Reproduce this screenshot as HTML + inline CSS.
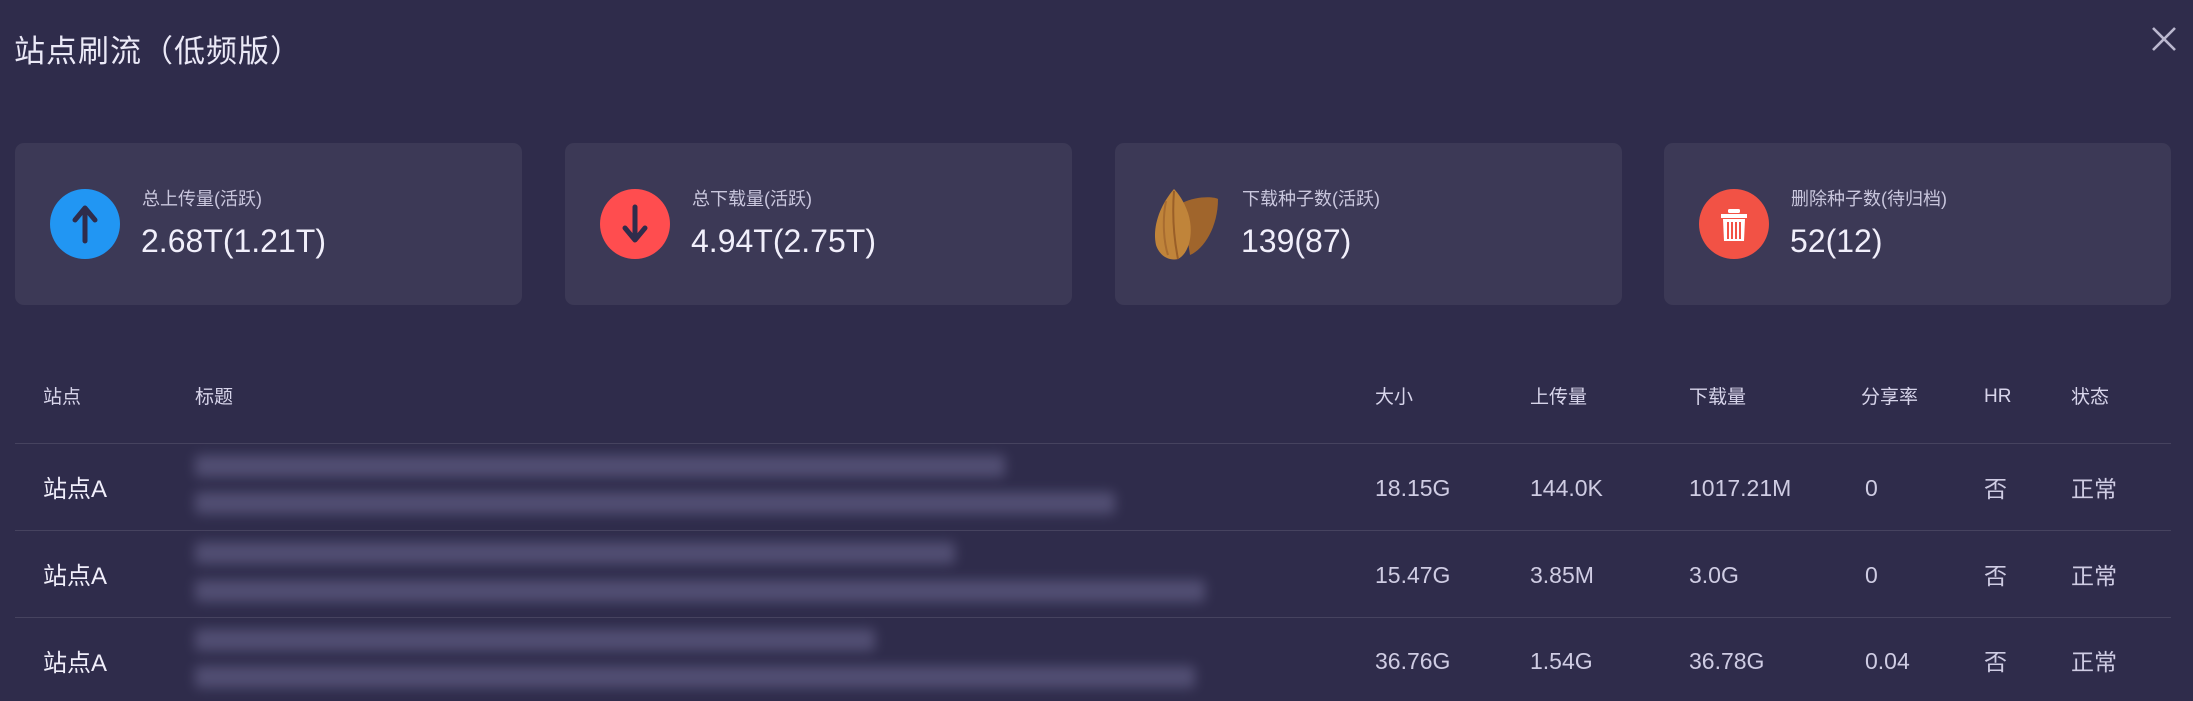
<!DOCTYPE html>
<html><head><meta charset="utf-8">
<style>
*{margin:0;padding:0;box-sizing:border-box}
body{width:2193px;height:701px;background:#2f2c4b;font-family:"Liberation Sans","Noto Sans CJK SC",sans-serif;color:#e6e4f4;position:relative;overflow:hidden}
.abs{position:absolute}
.title{left:14px;top:26px;font-size:31px;color:#ebe9f7;letter-spacing:1px}
.card{top:143px;height:162px;width:507px;background:#3c3956;border-radius:9px}
.ic{left:35px;top:46px;width:70px;height:70px;border-radius:50%}
.lbl{left:127px;top:42px;font-size:18px;color:#c9c6dd}
.val{left:126px;top:80px;font-size:32px;color:#f1effb}
.th{top:382px;font-size:19px;color:#d7d4ea}
.line{left:15px;width:2156px;height:1px;background:#46435f}
.site{left:43px;font-size:24px;color:#f0eefa}
.c{font-size:23px;color:#cfcce3}
.blur{left:195px;height:22px;background:#5d5a80;filter:blur(6px);border-radius:4px;opacity:.75}
</style></head><body>
<div class="abs title">站点刷流（低频版）</div>
<svg class="abs" style="left:2150px;top:25px" width="28" height="28" viewBox="0 0 28 28"><path d="M3 3L25 25M25 3L3 25" stroke="#bbb8cf" stroke-width="2.6"/></svg>

<div class="abs card" style="left:15px">
 <div class="abs ic" style="background:#2196f3"><svg width="70" height="70" viewBox="0 0 70 70"><path d="M35 52V20M25 31L35 19L45 31" stroke="#2f2c4b" stroke-width="5" fill="none" stroke-linecap="round" stroke-linejoin="round"/></svg></div>
 <div class="abs lbl">总上传量(活跃)</div><div class="abs val">2.68T(1.21T)</div>
</div>
<div class="abs card" style="left:565px">
 <div class="abs ic" style="background:#ff4d4f"><svg width="70" height="70" viewBox="0 0 70 70"><path d="M35 18V50M25 39L35 51L45 39" stroke="#2f2c4b" stroke-width="5" fill="none" stroke-linecap="round" stroke-linejoin="round"/></svg></div>
 <div class="abs lbl">总下载量(活跃)</div><div class="abs val">4.94T(2.75T)</div>
</div>
<div class="abs card" style="left:1115px">
 <svg class="abs" style="left:33px;top:44px" width="72" height="74" viewBox="0 0 72 74"><path d="M34 16C50 8 68 10 70 12C70 40 56 62 42 68Z" fill="#a0652c"/><path d="M26 2C12 18 4 40 8 58C12 70 22 74 30 72C42 66 46 44 40 26C36 14 30 6 26 2Z" fill="#c0843a"/><path d="M26 4C24 30 26 52 30 72" stroke="#9a5f28" stroke-width="2" fill="none"/><path d="M18 14C14 34 16 56 20 68" stroke="#a86c30" stroke-width="2" fill="none"/></svg>
 <div class="abs lbl">下载种子数(活跃)</div><div class="abs val">139(87)</div>
</div>
<div class="abs card" style="left:1664px">
 <div class="abs ic" style="background:#f25245"><svg width="70" height="70" viewBox="0 0 70 70"><rect x="29" y="20" width="12" height="4" rx="1.5" fill="#fff"/><rect x="22" y="25" width="26" height="4" fill="#fff"/><path d="M24 30H46L45 52H25Z" fill="#fff"/><path d="M29 33V50M33 33V50M37 33V50M41 33V50" stroke="#f25245" stroke-width="2"/></svg></div>
 <div class="abs lbl">删除种子数(待归档)</div><div class="abs val">52(12)</div>
</div>

<div class="abs th" style="left:43px">站点</div>
<div class="abs th" style="left:195px">标题</div>
<div class="abs th" style="left:1375px">大小</div>
<div class="abs th" style="left:1530px">上传量</div>
<div class="abs th" style="left:1689px">下载量</div>
<div class="abs th" style="left:1861px">分享率</div>
<div class="abs th" style="left:1984px;top:386px">HR</div>
<div class="abs th" style="left:2071px">状态</div>

<div class="abs line" style="top:443px"></div>
<div class="abs line" style="top:530px"></div>
<div class="abs line" style="top:617px"></div>

<div class="abs blur" style="top:455px;width:810px"></div>
<div class="abs blur" style="top:492px;width:920px"></div>
<div class="abs blur" style="top:542px;width:760px"></div>
<div class="abs blur" style="top:580px;width:1010px"></div>
<div class="abs blur" style="top:629px;width:680px"></div>
<div class="abs blur" style="top:666px;width:1000px"></div>

<div class="abs site" style="top:469px">站点A</div>
<div class="abs site" style="top:556px">站点A</div>
<div class="abs site" style="top:643px">站点A</div>

<div class="abs c" style="left:1375px;top:475px">18.15G</div>
<div class="abs c" style="left:1530px;top:475px">144.0K</div>
<div class="abs c" style="left:1689px;top:475px">1017.21M</div>
<div class="abs c" style="left:1865px;top:475px">0</div>
<div class="abs c" style="left:1984px;top:470px">否</div>
<div class="abs c" style="left:2071px;top:470px">正常</div>

<div class="abs c" style="left:1375px;top:562px">15.47G</div>
<div class="abs c" style="left:1530px;top:562px">3.85M</div>
<div class="abs c" style="left:1689px;top:562px">3.0G</div>
<div class="abs c" style="left:1865px;top:562px">0</div>
<div class="abs c" style="left:1984px;top:557px">否</div>
<div class="abs c" style="left:2071px;top:557px">正常</div>

<div class="abs c" style="left:1375px;top:648px">36.76G</div>
<div class="abs c" style="left:1530px;top:648px">1.54G</div>
<div class="abs c" style="left:1689px;top:648px">36.78G</div>
<div class="abs c" style="left:1865px;top:648px">0.04</div>
<div class="abs c" style="left:1984px;top:643px">否</div>
<div class="abs c" style="left:2071px;top:643px">正常</div>
</body></html>
